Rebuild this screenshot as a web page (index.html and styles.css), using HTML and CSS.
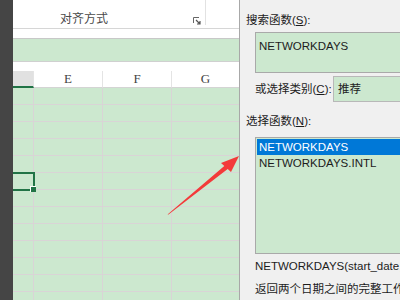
FILE: index.html
```html
<!DOCTYPE html>
<html lang="zh-CN">
<head>
<meta charset="utf-8">
<title>插入函数</title>
<link rel="stylesheet" href="styles.css">
</head>
<body>
<div class="app">
  <div class="strip"></div>
  <div class="sheet">
    <div class="ribbon">
      <div class="group">
        <span class="group-label">对齐方式</span>
        <svg class="launcher" width="8" height="8" viewBox="0 0 8 8"><path d="M0.5 6V0.5H6" fill="none" stroke="#666" stroke-width="1"/><path d="M3 3L7 7M7 4V7H4" fill="none" stroke="#555" stroke-width="1.2"/></svg>
      </div>
    </div>
    <div class="gap"></div>
    <div class="fbar"></div>
    <div class="gap"></div>
    <div class="grid">
      <div class="hd hd-sel"></div><div class="hd">E</div><div class="hd">F</div><div class="hd">G</div>
      <div class="c"></div><div class="c"></div><div class="c"></div><div class="c"></div>
      <div class="c"></div><div class="c"></div><div class="c"></div><div class="c"></div>
      <div class="c"></div><div class="c"></div><div class="c"></div><div class="c"></div>
      <div class="c"></div><div class="c"></div><div class="c"></div><div class="c"></div>
      <div class="c"></div><div class="c"></div><div class="c"></div><div class="c"></div>
      <div class="c"></div><div class="c"></div><div class="c"></div><div class="c"></div>
      <div class="c"></div><div class="c"></div><div class="c"></div><div class="c"></div>
      <div class="c"></div><div class="c"></div><div class="c"></div><div class="c"></div>
      <div class="c"></div><div class="c"></div><div class="c"></div><div class="c"></div>
      <div class="c"></div><div class="c"></div><div class="c"></div><div class="c"></div>
      <div class="c"></div><div class="c"></div><div class="c"></div><div class="c"></div>
      <div class="c"></div><div class="c"></div><div class="c"></div><div class="c"></div>
      <div class="c"></div><div class="c"></div><div class="c"></div><div class="c"></div>
      <div class="selection"><span class="handle"></span></div>
    </div>
  </div>
  <div class="dialog">
    <div class="label first">搜索函数(<u>S</u>):</div>
    <div class="search">NETWORKDAYS</div>
    <div class="cat-row">
      <span class="cat-label">或选择类别(<u>C</u>):</span>
      <span class="combo">推荐</span>
    </div>
    <div class="label second">选择函数(<u>N</u>):</div>
    <div class="listbox">
      <div class="item selected">NETWORKDAYS</div>
      <div class="item">NETWORKDAYS.INTL</div>
    </div>
    <div class="syntax">NETWORKDAYS(start_date,end_date,holidays)</div>
    <div class="desc">返回两个日期之间的完整工作日数</div>
  </div>
</div>
<svg class="arrow" width="400" height="300" viewBox="0 0 400 300"><polygon points="167.5,214.5 224.3,166 221,163 239,156 231,172 227.7,169 168.5,214.5" fill="#f33a3a"/></svg>
</body>
</html>
```

FILE: styles.css
```css
html, body {
  margin: 0;
  padding: 0;
  width: 400px;
  height: 300px;
  overflow: hidden;
  background: #ffffff;
}

body {
  position: relative;
  font-family: "Liberation Sans", "Noto Sans CJK SC", sans-serif;
  font-size: 12px;
  color: #1c1c1c;
}

.app {
  display: flex;
  height: 300px;
}

.strip {
  width: 13px;
  flex: none;
  background: #454545;
}

.sheet {
  width: 226px;
  flex: none;
  background: #ffffff;
  overflow: hidden;
}

.ribbon {
  height: 28px;
  border-bottom: 1px solid #d6d6d6;
  box-sizing: content-box;
}

.group {
  box-sizing: border-box;
  width: 193px;
  height: 25px;
  border-right: 1px solid #e2e2e2;
  display: flex;
  align-items: flex-end;
  padding-left: 47px;
  padding-right: 4px;
}

.group-label {
  font-family: "Noto Sans CJK SC", sans-serif;
  font-size: 12px;
  line-height: 14px;
  color: #4a4a4a;
}

.launcher {
  margin-left: auto;
  display: block;
}

.gap {
  height: 9px;
}

.fbar {
  height: 22px;
  background: #cce8cf;
  border-top: 1px solid #c8c8c8;
  border-bottom: 1px solid #d0d0d0;
}

.grid {
  position: relative;
  display: grid;
  grid-template-columns: 21px 69px 69px 67px;
  grid-auto-rows: 17px;
}

.hd,
.c {
  box-sizing: border-box;
  border-right: 1px solid #d9d4d6;
  border-bottom: 1px solid #d9d4d6;
}

.hd:nth-child(4n),
.c:nth-child(4n) {
  border-right: none;
}

.hd {
  background: #ffffff;
  border-right-color: #e4e4e4;
  border-bottom-color: #d4d4d4;
  font-family: "Liberation Serif", serif;
  font-size: 13px;
  line-height: 16px;
  text-align: center;
  color: #444444;
}

.hd-sel {
  background: #e1e1e1;
  border-bottom: 2px solid #217346;
}

.c {
  background: #cce8cf;
}

.selection {
  position: absolute;
  left: 0;
  top: 101px;
  width: 22px;
  height: 19px;
  box-sizing: border-box;
  border: 2px solid #217346;
  border-left: none;
}

.handle {
  position: absolute;
  right: -3px;
  bottom: -3px;
  width: 5px;
  height: 5px;
  background: #217346;
  border-left: 1px solid #ffffff;
  border-top: 1px solid #ffffff;
}

.dialog {
  width: 160px;
  flex: none;
  background: #f0f0f0;
  border-left: 1px solid #a8a8a8;
  overflow: hidden;
  white-space: nowrap;
  padding-left: 6px;
  box-sizing: content-box;
  font-size: 11.5px;
}

.label {
  line-height: 16px;
}

.label.first {
  margin-top: 12px;
}

.search {
  margin-top: 4px;
  margin-left: 9px;
  width: 170px;
  height: 41px;
  box-sizing: border-box;
  border: 1px solid #a9a9a9;
  background: #cce8cf;
  padding: 5px 0 0 3px;
  line-height: 16px;
}

.cat-row {
  display: flex;
  align-items: center;
  margin-top: 3px;
  margin-left: 9px;
  height: 26px;
}

.cat-label {
  width: 78px;
  flex: none;
  line-height: 16px;
}

.combo {
  flex: none;
  width: 80px;
  height: 26px;
  box-sizing: border-box;
  border: 1px solid #b8b8b8;
  background: #cce8cf;
  padding-left: 4px;
  line-height: 24px;
}

.label.second {
  margin-top: 11px;
}

.listbox {
  margin-top: 8px;
  margin-left: 9px;
  width: 170px;
  height: 117px;
  box-sizing: border-box;
  border: 1px solid #a9a9a9;
  background: #cce8cf;
  padding: 1px;
}

.item {
  height: 16px;
  line-height: 16px;
  padding-left: 2px;
}

.item.selected {
  background: #0078d7;
  color: #ffffff;
}

.syntax {
  margin-top: 4px;
  margin-left: 9px;
  line-height: 16px;
}

.desc {
  margin-top: 6px;
  margin-left: 9px;
  line-height: 16px;
  font-family: "Noto Sans CJK SC", sans-serif;
}

.arrow {
  position: absolute;
  left: 0;
  top: 0;
  pointer-events: none;
}
```
